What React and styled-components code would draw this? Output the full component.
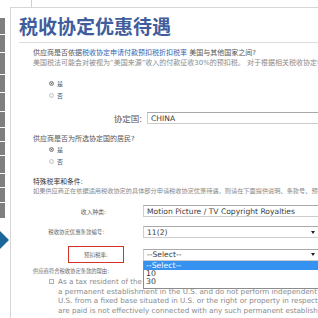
import React from 'react';
import styled, { createGlobalStyle } from 'styled-components';

const GlobalStyle = createGlobalStyle`
  html, body {
    margin: 0;
    padding: 0;
    background: #fff;
    overflow: hidden;
  }
  body {
    font-family: "DejaVu Sans", "Noto Sans CJK SC", sans-serif;
  }
`;

const Page = styled.div`
  display: flex;
  width: 322px;
  height: 318px;
  overflow: hidden;
`;

const Rail = styled.div`
  width: 10px;
  flex: none;
  padding-top: 18px;
  display: flex;
  flex-direction: column;
`;

const RailBar = styled.div`
  width: 5px;
  height: ${p => p.h}px;
  background: #7f7f7f;
  border-bottom: 1px solid #fff;
`;

const Diamond = styled.svg`
  display: block;
  margin-top: 11px;
`;

const Main = styled.div`
  flex: 1;
  min-width: 0;
  display: flex;
  flex-direction: column;
`;

const Connector = styled.div`
  height: 7px;
  margin-left: 21px;
  border-left: 1px solid #d0d0d0;
`;

const Panel = styled.div`
  flex: 1;
  border-top: 1px solid #d6d6d6;
  border-left: 1px solid #d6d6d6;
`;

const Title = styled.h1`
  margin: 6px 0 0 8px;
  padding-bottom: 4px;
  border-bottom: 1px solid #dcdcdc;
  font: bold 19px/24px "Noto Sans CJK SC", sans-serif;
  color: #3f5d9c;
`;

const Body = styled.div`
  padding-left: 22px;
  display: flex;
  flex-direction: column;
`;

const Text = styled.p`
  margin: ${p => p.mt || 0}px 0 0;
  font-size: ${p => p.size || 7}px;
  line-height: ${p => p.lh || 10}px;
  color: ${p => p.color || '#555'};
  white-space: nowrap;
`;

const Link = styled.span`
  color: #2f5fae;
`;

const RadioGroup = styled.div`
  margin-top: ${p => p.mt || 0}px;
  display: flex;
  flex-direction: column;
`;

const RadioRow = styled.label`
  display: flex;
  align-items: center;
  gap: 3px;
  height: 12px;
  padding-left: 16px;
  font-size: 6px;
  color: #555;
`;

const RadioDot = styled.span`
  width: 5px;
  height: 5px;
  box-sizing: border-box;
  border-radius: 50%;
  border: 1px solid ${p => (p.checked ? '#999' : '#c4c4c4')};
  background: ${p => (p.checked ? '#333' : '#f4f4f4')};
  box-shadow: ${p => (p.checked ? 'inset 0 0 0 1px #eee' : 'none')};
`;

const FieldRow = styled.div`
  display: flex;
  align-items: center;
  margin-top: ${p => p.mt}px;
`;

const FieldLabel = styled.div`
  width: ${p => p.w}px;
  flex: none;
  box-sizing: border-box;
  text-align: right;
  padding-right: ${p => p.pr}px;
  font-size: ${p => p.size}px;
  color: ${p => p.color || '#666'};
  white-space: nowrap;
`;

const Flag = styled.div`
  margin-left: 35px;
  width: 56px;
  height: 17px;
  box-sizing: border-box;
  border: 1.5px solid #d8332a;
  display: flex;
  align-items: center;
  justify-content: center;
  font-size: 5.5px;
  color: #666;
`;

const FieldWrap = styled.div`
  flex: 1;
  position: relative;
`;

const Field = styled.div`
  height: 12px;
  box-sizing: border-box;
  border: 1px solid #cdcdcd;
  border-top-color: #a9a9a9;
  display: flex;
  align-items: center;
  justify-content: space-between;
  padding: 0 6px 0 3px;
  font-size: 7.6px;
  color: #3c3c3c;
  background: #fff;
  white-space: nowrap;
`;

const Arrow = styled.svg`
  display: block;
  flex: none;
`;

const Dropdown = styled.ul`
  position: absolute;
  top: 100%;
  left: 0;
  width: 220px;
  margin: 0;
  padding: 0 0 2px;
  list-style: none;
  background: #fff;
  border: 1px solid #8c8c8c;
  border-top: none;
  z-index: 2;
`;

const Option = styled.li`
  height: ${p => (p.active ? 9 : 8)}px;
  line-height: ${p => (p.active ? 9 : 8)}px;
  padding-left: 2px;
  font-size: 7.8px;
  color: ${p => (p.active ? '#fff' : '#333')};
  background: ${p => (p.active ? '#3592f0' : '#fff')};
`;

const CheckRow = styled.div`
  display: flex;
  gap: 4px;
  padding-left: 16px;
  margin-top: 2px;
`;

const CheckBox = styled.span`
  flex: none;
  width: 5px;
  height: 5px;
  margin-top: 2px;
  box-sizing: border-box;
  border: 1px solid #b0b0b0;
  background: #f6f6f6;
`;

const CheckText = styled.p`
  margin: 0;
  font-size: 7.2px;
  line-height: 9.5px;
  color: #8a8a8a;
  white-space: nowrap;
`;

const bars = [16, 17, 21, 17, 18, 15, 13, 13, 17, 13, 14, 15];

const SelectArrow = () => (
  <Arrow width="4" height="3" viewBox="0 0 4 3">
    <polygon points="0,0 4,0 2,3" fill="#222" />
  </Arrow>
);

export default function App() {
  return (
    <>
      <GlobalStyle />
      <Page>
        <Rail>
          {bars.map((h, i) => (
            <RailBar key={i} h={h} />
          ))}
          <Diamond width="10" height="20" viewBox="0 0 10 20">
            <polygon points="0,1 9,10 0,19" fill="#1c6699" />
          </Diamond>
        </Rail>
        <Main>
          <Connector />
          <Panel>
            <Title>税收协定优惠待遇</Title>
            <Body>
              <Text mt={5}>
                供应商是否依据<Link>税收协定申请付款预扣税折扣税率</Link> 美国与其他国家之间?
              </Text>
              <Text color="#8a8a8a">
                美国税法可能会对被视为“美国来源”收入的付款征收30%的预扣税。 对于根据相关税收协定申请优惠待遇的供应商
              </Text>

              <RadioGroup mt={9}>
                <RadioRow><RadioDot checked />是</RadioRow>
                <RadioRow><RadioDot />否</RadioRow>
              </RadioGroup>

              <FieldRow mt={11}>
                <FieldLabel w={114} pr={5} size={8.5} color="#555">协定国:</FieldLabel>
                <FieldWrap>
                  <Field>CHINA</Field>
                </FieldWrap>
              </FieldRow>

              <Text mt={11} lh={8}>供应商是否为所选协定国的居民?</Text>
              <RadioGroup>
                <RadioRow><RadioDot checked />是</RadioRow>
                <RadioRow><RadioDot />否</RadioRow>
              </RadioGroup>

              <Text mt={11} lh={9} size={6.8} color="#333">特殊税率和条件:</Text>
              <Text lh={8} size={6.2} color="#888">
                如果供应商正在依据适用税收协定的具体部分申请税收协定优惠待遇，则请在下面提供说明、条款号、预扣税率及其他条件。
              </Text>

              <FieldRow mt={10}>
                <FieldLabel w={110} pr={37} size={5.8}>收入种类:</FieldLabel>
                <FieldWrap>
                  <Field>Motion Picture / TV Copyright Royalties</Field>
                </FieldWrap>
              </FieldRow>

              <FieldRow mt={9}>
                <FieldLabel w={110} pr={39} size={5.4}>税收协定优惠条款编号:</FieldLabel>
                <FieldWrap>
                  <Field>11(2)<SelectArrow /></Field>
                </FieldWrap>
              </FieldRow>

              <FieldRow mt={8}>
                <FieldLabel w={110} pr={0} size={5.5}>
                  <Flag>预扣税率:</Flag>
                </FieldLabel>
                <FieldWrap>
                  <Field>--Select--<SelectArrow /></Field>
                  <Dropdown>
                    <Option active>--Select--</Option>
                    <Option>10</Option>
                    <Option>30</Option>
                  </Dropdown>
                </FieldWrap>
              </FieldRow>

              <Text mt={4} lh={8} size={5.3} color="#666">供应商符合税收协定条款的理由:</Text>
              <CheckRow>
                <CheckBox />
                <CheckText>
                  As a tax resident of the treaty country, I do not have
                  <br />
                  a permanent establishment in the U.S. and do not perform independent
                  <br />
                  U.S. from a fixed base situated in U.S. or the right or property in respect
                  <br />
                  are paid is not effectively connected with any such permanent establishment
                </CheckText>
              </CheckRow>
            </Body>
          </Panel>
        </Main>
      </Page>
    </>
  );
}
